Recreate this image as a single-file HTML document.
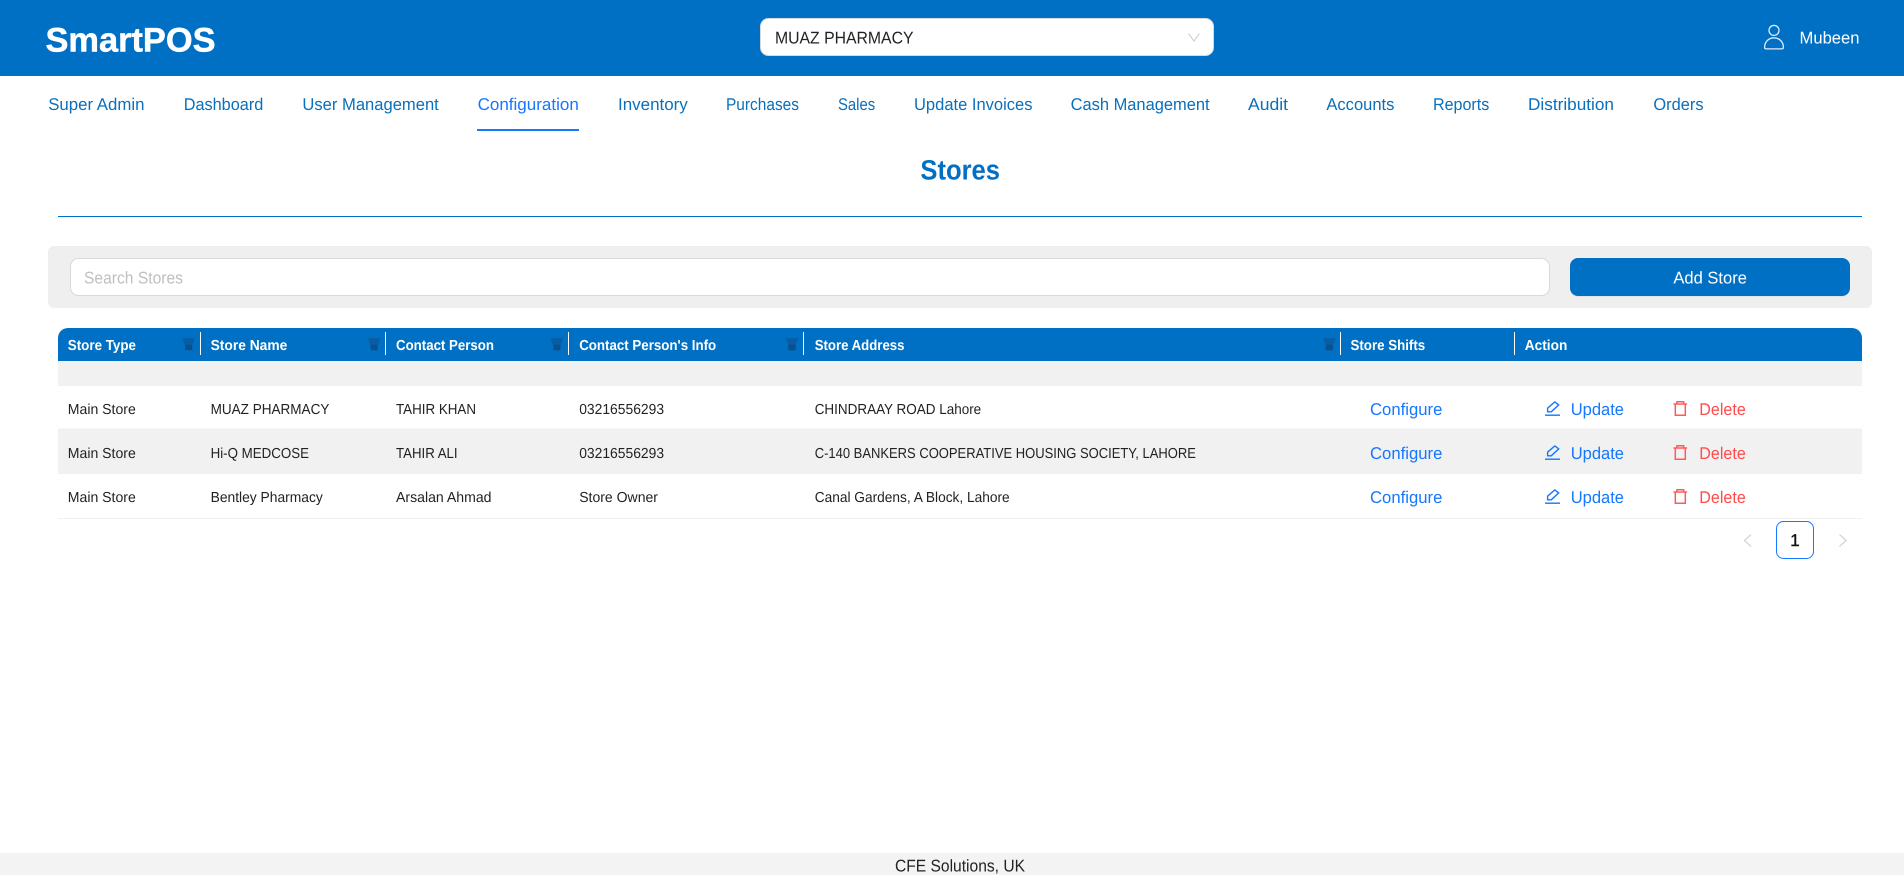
<!DOCTYPE html>
<html lang="en"><head><meta charset="utf-8"><title>Stores - SmartPOS</title>
<style>
html,body{margin:0;padding:0;background:#fff;width:1904px;height:875px;overflow:hidden}
svg{display:block}
text{font-family:"Liberation Sans",Arial,sans-serif;white-space:pre;text-rendering:geometricPrecision}
.nav text{font-size:17px;fill:#0a70bd}
.th text{font-size:14.5px;font-weight:bold;fill:#fff}
.td text{font-size:14.5px;fill:#222}
.cf text{font-size:17px;fill:#1677ff}
.dl text{font-size:17px;fill:#ff4d4f}
</style></head><body>
<svg width="1904" height="875" viewBox="0 0 1904 875" xmlns="http://www.w3.org/2000/svg">
<rect width="1904" height="76" fill="#0070c4"/>
<text x="45.5" y="51.5" font-size="34" font-weight="bold" fill="#fff" stroke="#fff" stroke-width=".5" textLength="170" lengthAdjust="spacingAndGlyphs">SmartPOS</text>
<rect x="760.5" y="18.5" width="453" height="37" rx="8" fill="#fff" stroke="#d9d9d9"/>
<text x="775" y="43.5" font-size="17" fill="#222" textLength="138.5" lengthAdjust="spacingAndGlyphs">MUAZ PHARMACY</text>
<path d="M1188.5 33.5L1194 41L1199.5 33.5" fill="none" stroke="#c8c8c8" stroke-width="1"/>
<g fill="none" stroke="#dfeaf6" stroke-width="1.3"><circle cx="1774" cy="30.4" r="5"/><path d="M1766.2 48.9C1765.2 48.9 1764.6 48.3 1764.6 47.3C1764.6 41.8 1768.8 37.8 1774 37.8C1779.2 37.8 1783.4 41.8 1783.4 47.3C1783.4 48.3 1782.8 48.9 1781.8 48.9Z" stroke-linejoin="round"/></g>
<text x="1799.5" y="43.5" font-size="17" fill="#fff" textLength="60" lengthAdjust="spacingAndGlyphs">Mubeen</text>

<g class="nav">
<text x="48.2" y="110" textLength="96.3" lengthAdjust="spacingAndGlyphs">Super Admin</text>
<text x="183.7" y="110" textLength="79.6" lengthAdjust="spacingAndGlyphs">Dashboard</text>
<text x="302.4" y="110" textLength="136.4" lengthAdjust="spacingAndGlyphs">User Management</text>
<text x="477.6" y="110" textLength="101.2" lengthAdjust="spacingAndGlyphs" style="fill:#1677ff">Configuration</text>
<text x="618" y="110" textLength="69.8" lengthAdjust="spacingAndGlyphs">Inventory</text>
<text x="726" y="110" textLength="73" lengthAdjust="spacingAndGlyphs">Purchases</text>
<text x="838" y="110" textLength="37.2" lengthAdjust="spacingAndGlyphs">Sales</text>
<text x="914" y="110" textLength="118.5" lengthAdjust="spacingAndGlyphs">Update Invoices</text>
<text x="1070.6" y="110" textLength="139" lengthAdjust="spacingAndGlyphs">Cash Management</text>
<text x="1248" y="110" textLength="40" lengthAdjust="spacingAndGlyphs">Audit</text>
<text x="1326.4" y="110" textLength="68" lengthAdjust="spacingAndGlyphs">Accounts</text>
<text x="1433" y="110" textLength="56.3" lengthAdjust="spacingAndGlyphs">Reports</text>
<text x="1528" y="110" textLength="86" lengthAdjust="spacingAndGlyphs">Distribution</text>
<text x="1653.4" y="110" textLength="50.2" lengthAdjust="spacingAndGlyphs">Orders</text>
</g>
<rect x="477" y="129" width="102" height="2" fill="#1677ff"/>

<text x="920.4" y="179.5" font-size="28" font-weight="bold" fill="#0070c4" textLength="79.6" lengthAdjust="spacingAndGlyphs">Stores</text>
<rect x="58" y="216" width="1804" height="1" fill="#0070c4"/>

<rect x="48" y="246" width="1824" height="62" rx="6" fill="#efefef"/>
<rect x="70.5" y="258.5" width="1479" height="37" rx="8" fill="#fff" stroke="#d9d9d9"/>
<text x="84" y="283.7" font-size="17" fill="#bfbfbf" textLength="99" lengthAdjust="spacingAndGlyphs">Search Stores</text>
<rect x="1570" y="259" width="280" height="38" rx="8" fill="#000" opacity=".05"/>
<rect x="1570" y="258" width="280" height="38" rx="8" fill="#0070c4"/>
<text x="1673.4" y="283.5" font-size="17" fill="#fff" textLength="73.5" lengthAdjust="spacingAndGlyphs">Add Store</text>

<path d="M58 361V338A10 10 0 0 1 68 328H1852A10 10 0 0 1 1862 338V361Z" fill="#0070c4"/>
<rect x="58" y="361" width="1804" height="25" fill="#f1f1f1"/>
<rect x="58" y="429" width="1804" height="45" fill="#f1f1f1"/>
<rect x="58" y="428.5" width="1804" height="1" fill="#f0f0f0"/>
<rect x="58" y="518" width="1804" height="1" fill="#f0f0f0"/>

<g fill="#fff">
<rect x="200" y="332" width="1" height="23"/><rect x="385" y="332" width="1" height="23"/><rect x="568" y="332" width="1" height="23"/><rect x="803" y="332" width="1" height="23"/><rect x="1340" y="332" width="1" height="23"/><rect x="1514" y="332" width="1" height="23"/>
</g>
<defs><g id="f"><path d="M0 0H12.6L10.2 6.4H2.4Z" fill="#0a5ca3"/><rect x="2.7" y="6.4" width="7.2" height="5.6" fill="#0a4f8e"/></g></defs>
<use href="#f" x="182.4" y="338.3"/><use href="#f" x="367.8" y="338.3"/><use href="#f" x="550.6" y="338.3"/><use href="#f" x="785.7" y="338.3"/><use href="#f" x="1323" y="338.3"/>

<g class="th">
<text x="67.8" y="350" textLength="68.2" lengthAdjust="spacingAndGlyphs">Store Type</text>
<text x="210.6" y="350" textLength="76.7" lengthAdjust="spacingAndGlyphs">Store Name</text>
<text x="396" y="350" textLength="98" lengthAdjust="spacingAndGlyphs">Contact Person</text>
<text x="579.2" y="350" textLength="137" lengthAdjust="spacingAndGlyphs">Contact Person's Info</text>
<text x="814.7" y="350" textLength="89.8" lengthAdjust="spacingAndGlyphs">Store Address</text>
<text x="1350.5" y="350" textLength="74.7" lengthAdjust="spacingAndGlyphs">Store Shifts</text>
<text x="1524.8" y="350" textLength="42.5" lengthAdjust="spacingAndGlyphs">Action</text>
</g>

<g class="td">
<text x="67.8" y="414" textLength="68" lengthAdjust="spacingAndGlyphs">Main Store</text>
<text x="210.6" y="414" textLength="118.8" lengthAdjust="spacingAndGlyphs">MUAZ PHARMACY</text>
<text x="396" y="414" textLength="80" lengthAdjust="spacingAndGlyphs">TAHIR KHAN</text>
<text x="579.2" y="414" textLength="84.9" lengthAdjust="spacingAndGlyphs">03216556293</text>
<text x="814.7" y="414" textLength="166.5" lengthAdjust="spacingAndGlyphs">CHINDRAAY ROAD Lahore</text>
<text x="67.8" y="458" textLength="68" lengthAdjust="spacingAndGlyphs">Main Store</text>
<text x="210.6" y="458" textLength="98.4" lengthAdjust="spacingAndGlyphs">Hi-Q MEDCOSE</text>
<text x="396" y="458" textLength="61.6" lengthAdjust="spacingAndGlyphs">TAHIR ALI</text>
<text x="579.2" y="458" textLength="84.9" lengthAdjust="spacingAndGlyphs">03216556293</text>
<text x="814.7" y="458" textLength="381.2" lengthAdjust="spacingAndGlyphs">C-140 BANKERS COOPERATIVE HOUSING SOCIETY, LAHORE</text>
<text x="67.8" y="502" textLength="68" lengthAdjust="spacingAndGlyphs">Main Store</text>
<text x="210.6" y="502" textLength="112.2" lengthAdjust="spacingAndGlyphs">Bentley Pharmacy</text>
<text x="396" y="502" textLength="95.5" lengthAdjust="spacingAndGlyphs">Arsalan Ahmad</text>
<text x="579.2" y="502" textLength="78.8" lengthAdjust="spacingAndGlyphs">Store Owner</text>
<text x="814.7" y="502" textLength="195" lengthAdjust="spacingAndGlyphs">Canal Gardens, A Block, Lahore</text>
</g>

<defs>
<g id="pen" fill="none" stroke="#1677ff" stroke-width="1.4"><path d="M0 14.2H15"/><path d="M2.6 10.8V7.2L9.8 0.9L13.8 3.9L6.2 10.8Z" stroke-linejoin="round"/></g>
<g id="bin" fill="none" stroke="#ff5a5c" stroke-width="1.5"><path d="M0.2 3H13.8"/><path d="M3.6 3V0.7H10.4V3"/><path d="M2 3V14.3H12V3"/></g>
</defs>
<g class="cf">
<text x="1370" y="415" textLength="72.4" lengthAdjust="spacingAndGlyphs">Configure</text>
<text x="1570.7" y="415" textLength="53.3" lengthAdjust="spacingAndGlyphs">Update</text>
<text x="1370" y="459" textLength="72.4" lengthAdjust="spacingAndGlyphs">Configure</text>
<text x="1570.7" y="459" textLength="53.3" lengthAdjust="spacingAndGlyphs">Update</text>
<text x="1370" y="503" textLength="72.4" lengthAdjust="spacingAndGlyphs">Configure</text>
<text x="1570.7" y="503" textLength="53.3" lengthAdjust="spacingAndGlyphs">Update</text>
</g>
<g class="dl">
<text x="1699.3" y="415" textLength="46.5" lengthAdjust="spacingAndGlyphs">Delete</text>
<text x="1699.3" y="459" textLength="46.5" lengthAdjust="spacingAndGlyphs">Delete</text>
<text x="1699.3" y="503" textLength="46.5" lengthAdjust="spacingAndGlyphs">Delete</text>
</g>
<use href="#pen" x="1545" y="401"/><use href="#pen" x="1545" y="445"/><use href="#pen" x="1545" y="489"/>
<use href="#bin" x="1673.3" y="401"/><use href="#bin" x="1673.3" y="445"/><use href="#bin" x="1673.3" y="489"/>

<path d="M1751 534.5L1744.5 540.5L1751 546.5" fill="none" stroke="#cccccc" stroke-width="1.1"/>
<rect x="1776.5" y="521.5" width="37" height="37" rx="7" fill="#fff" stroke="#1677ff"/>
<text x="1795" y="546" font-size="17" fill="#111" stroke="#111" stroke-width=".4" text-anchor="middle">1</text>
<path d="M1839.5 534.5L1846 540.5L1839.5 546.5" fill="none" stroke="#cccccc" stroke-width="1.1"/>

<rect x="0" y="853" width="1904" height="22" fill="#f3f3f3"/>
<text x="895" y="871.5" font-size="17" fill="#222" textLength="130" lengthAdjust="spacingAndGlyphs">CFE Solutions, UK</text>
</svg>
</body></html>
